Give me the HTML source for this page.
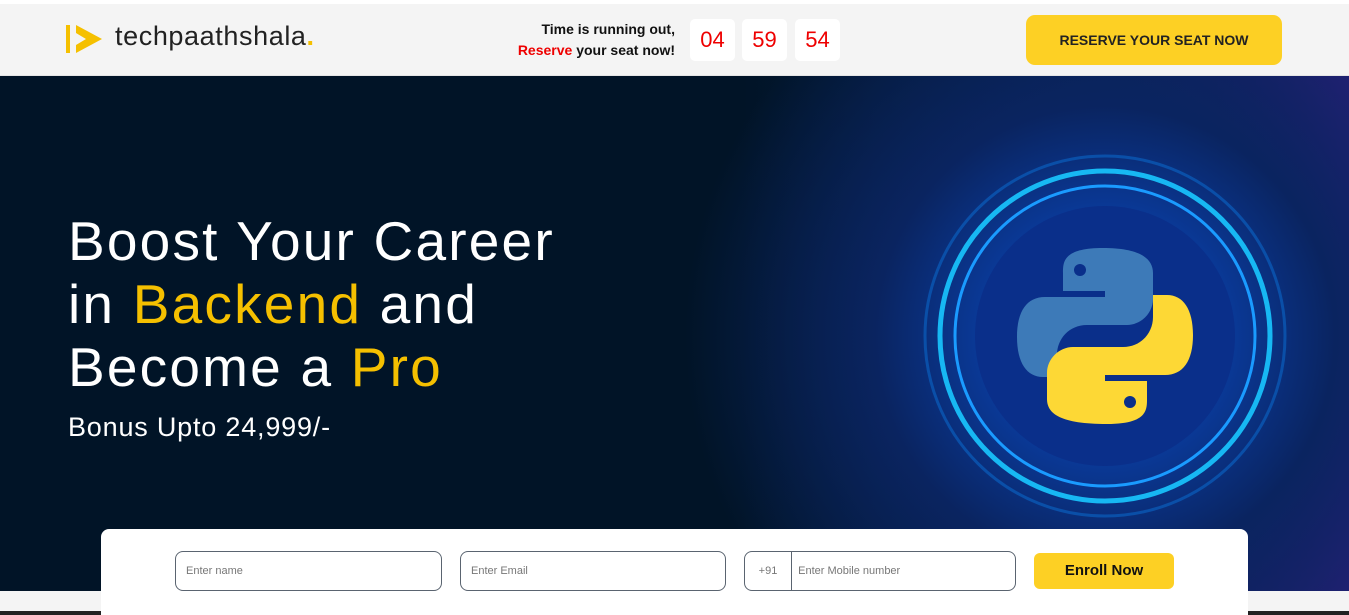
<!DOCTYPE html><html><head><style>
*{margin:0;padding:0;box-sizing:border-box}
body{width:1349px;height:615px;overflow:hidden;font-family:"Liberation Sans",sans-serif;background:#f4f4f4;position:relative}
.top{position:absolute;top:0;left:0;width:1349px;height:76px;background:#f4f4f4;border-top:4px solid #fff;border-bottom:1px solid #e5e5e5}
.hero{position:absolute;top:76px;left:0;width:1349px;height:515px;background:radial-gradient(circle at 1105px 260px,#0a5cc8 0,#0a3a9a 120px,#0a2460 230px,rgba(1,21,42,0) 420px),linear-gradient(90deg,#011427 0,#011427 55%,#06204a 80%,#2a1f7a 100%)}
.card{position:absolute;left:101px;top:529px;width:1147px;height:86px;background:#fff;border-radius:8px 8px 0 0}
.inp{position:absolute;top:551px;height:40px;border:1px solid #5a6470;border-radius:8px;font-size:11px;color:#777;padding:13px 10px}
.t{position:absolute;top:15px;width:45px;height:42px;background:#fff;border-radius:5px;color:#e00;font-size:22px;text-align:center;line-height:42px}
</style></head><body>
<div class="top">
<svg style="position:absolute;left:66px;top:19px" width="40" height="32"><rect x="0" y="2" width="4" height="28" fill="#f5c000"/><polygon points="10,2 36,16 10,30 10,22 20,16 10,10" fill="#f5c000"/></svg>
<div style="position:absolute;left:115px;top:17px;font-size:27px;color:#222;letter-spacing:0.6px">techpaathshala<span style="color:#f5c000;font-weight:bold">.</span></div>
<div style="position:absolute;left:485px;top:15px;width:190px;text-align:right;font-size:14px;line-height:21px;color:#111;font-weight:bold">Time is running out,<br><span style="color:#e00">Reserve</span> your seat now!</div>
<div class="t" style="left:690px">04</div>
<div class="t" style="left:742px">59</div>
<div class="t" style="left:795px">54</div>
<div style="position:absolute;left:1026px;top:11px;width:256px;height:50px;background:#fdd024;border-radius:9px;text-align:center;line-height:50px;font-size:14px;color:#222;font-weight:bold">RESERVE YOUR SEAT NOW</div>
</div>
<div class="hero">
<svg style="position:absolute;left:900px;top:0" width="449" height="515">
<circle cx="205" cy="260" r="180" fill="none" stroke="#0a4fa8" stroke-width="3"/>
<circle cx="205" cy="260" r="165" fill="none" stroke="#18c8ff" stroke-width="5" opacity=".9"/>
<circle cx="205" cy="260" r="150" fill="none" stroke="#1a9bff" stroke-width="3"/>
<circle cx="205" cy="260" r="130" fill="#0a2f8a"/>
<g transform="translate(115,170)">
<path d="M88 2c-40 0-40 14-40 25v18h42v6H30c-18 0-28 14-28 40s10 40 26 40h14v-22c0-16 12-30 30-30h40c14 0 26-12 26-26V27C138 12 124 2 88 2z" fill="#3d7ab8"/>
<circle cx="65" cy="24" r="6" fill="#0a2f8a"/>
<path d="M92 178c40 0 40-14 40-25v-18H90v-6h60c18 0 28-14 28-40s-10-40-26-40h-14v22c0 16-12 30-30 30H58c-14 0-26 12-26 26v26c0 15 14 25 60 25z" fill="#fdd835"/>
<circle cx="115" cy="156" r="6" fill="#0a2f8a"/>
</g></svg>
<div style="position:absolute;left:68px;top:134px;font-size:55px;line-height:63px;color:#fff;letter-spacing:2.2px">Boost Your Career<br>in <span style="color:#f5c000">Backend</span> and<br>Become a <span style="color:#f5c000">Pro</span></div>
<div style="position:absolute;left:68px;top:336px;font-size:27px;color:#fff;letter-spacing:0.8px">Bonus Upto 24,999/-</div>
</div>
<div style="position:absolute;left:0;top:611px;width:1349px;height:4px;background:#222"></div>
<div class="card"></div>
<div class="inp" style="left:175px;width:267px">Enter name</div>
<div class="inp" style="left:460px;width:266px">Enter Email</div>
<div class="inp" style="left:744px;width:272px;padding-left:0;padding-top:0"><span style="display:inline-block;width:47px;text-align:center;border-right:1px solid #5a6470;height:38px;line-height:38px">+91</span> &nbsp;Enter Mobile number</div>
<div style="position:absolute;left:1034px;top:553px;width:140px;height:36px;background:#fdd024;border-radius:6px;text-align:center;line-height:36px;font-size:15px;font-weight:bold;color:#111">Enroll Now</div>
</body></html>
